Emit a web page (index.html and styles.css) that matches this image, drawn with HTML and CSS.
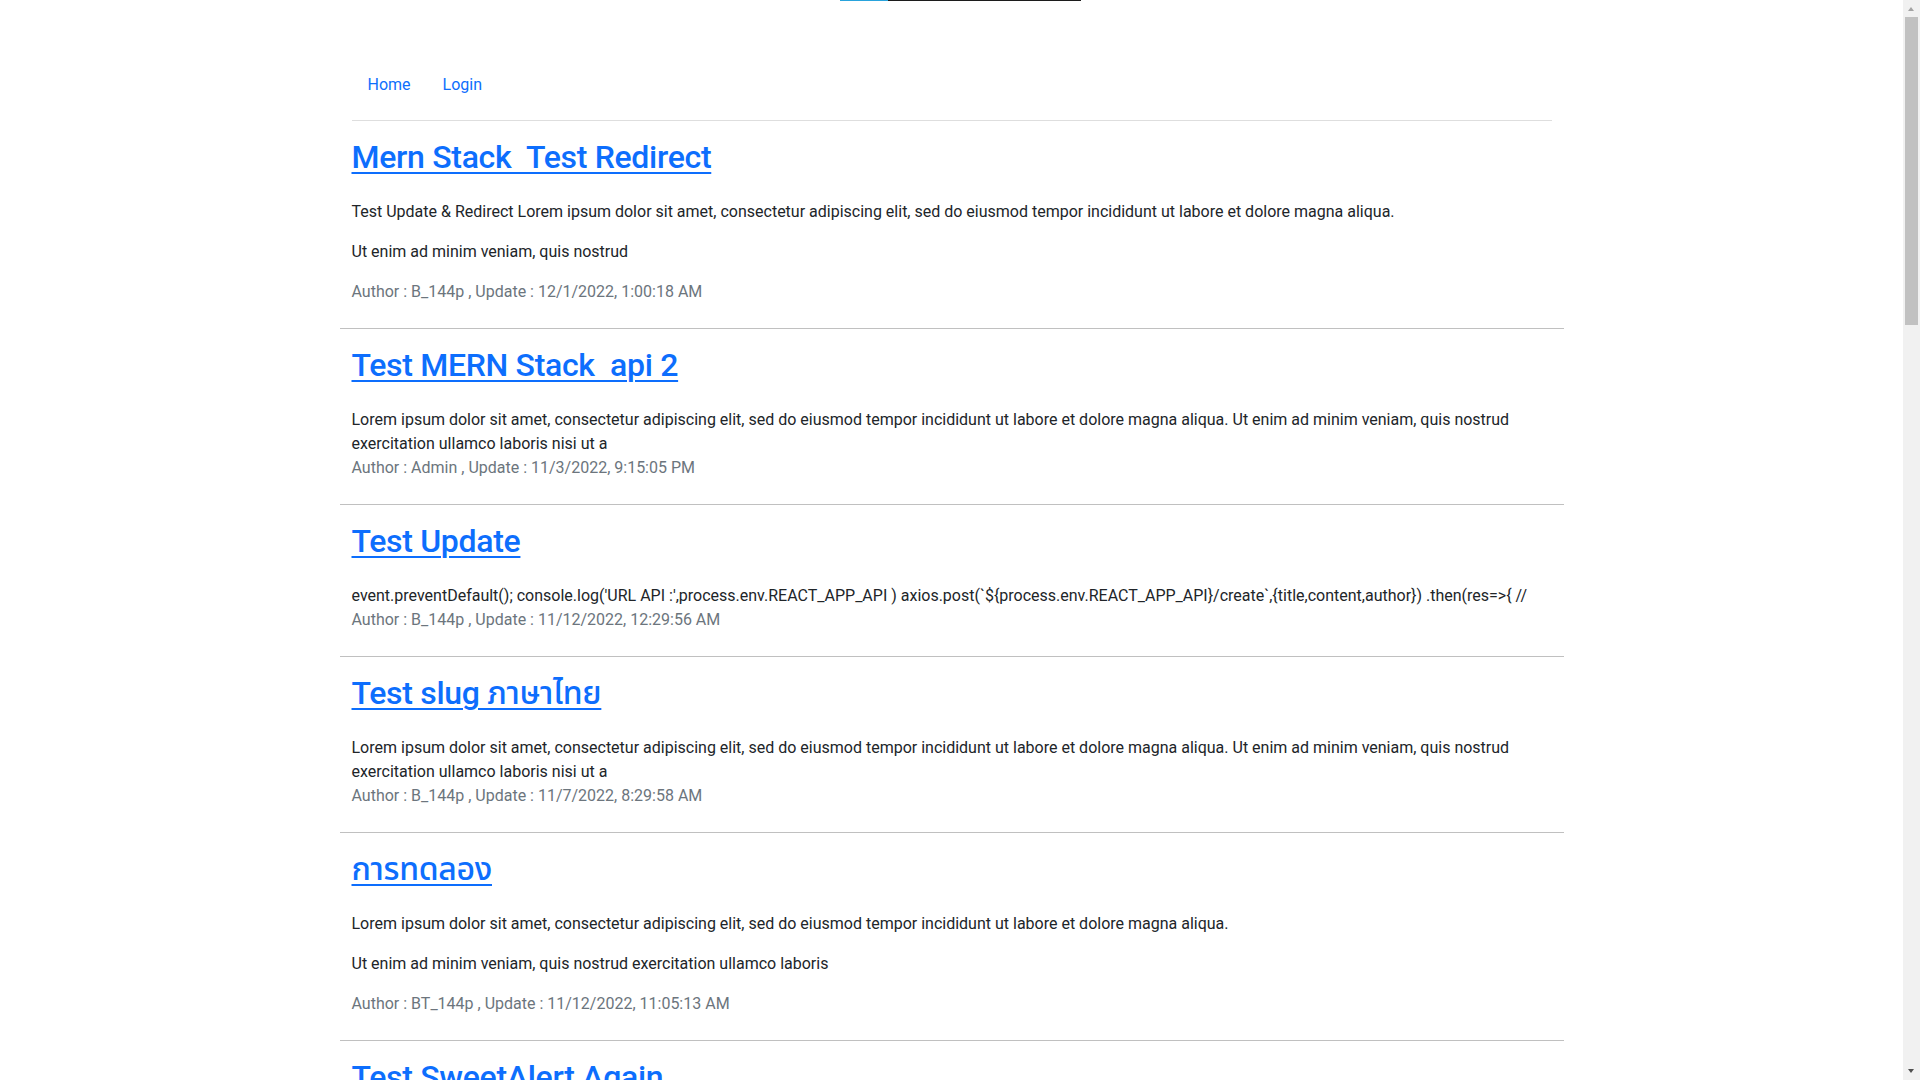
FILE: index.html
```html
<!DOCTYPE html>
<html lang="th">
<head>
<meta charset="utf-8">
<title>Blog</title>
<link rel="stylesheet" href="styles.css">
</head>
<body>
<div class="loadbar"><span class="loadbar-blue"></span><span class="loadbar-dark"></span></div>
<div class="scrollbar" aria-hidden="true">
  <span class="scroll-arrow scroll-up"></span>
  <span class="scroll-thumb"></span>
  <span class="scroll-arrow scroll-down"></span>
</div>
<main class="container">
  <header class="header">
    <nav class="nav">
      <a class="nav-link" href="#">Home</a>
      <a class="nav-link" href="#">Login</a>
    </nav>
    <hr class="nav-rule">
  </header>

  <article class="post">
    <a class="post-title" href="#">Mern Stack&nbsp; Test Redirect</a>
    <div class="post-content">
      <p>Test Update &amp; Redirect Lorem ipsum dolor sit amet, consectetur adipiscing elit, sed do eiusmod tempor incididunt ut labore et dolore magna aliqua.</p>
      <p>Ut enim ad minim veniam, quis nostrud</p>
    </div>
    <p class="post-meta">Author : B_144p , Update : 12/1/2022, 1:00:18 AM</p>
  </article>

  <article class="post">
    <a class="post-title" href="#">Test MERN Stack&nbsp; api 2</a>
    <div class="post-content">Lorem ipsum dolor sit amet, consectetur adipiscing elit, sed do eiusmod tempor incididunt ut labore et dolore magna aliqua. Ut enim ad minim veniam, quis nostrud exercitation ullamco laboris nisi ut a</div>
    <p class="post-meta">Author : Admin , Update : 11/3/2022, 9:15:05 PM</p>
  </article>

  <article class="post">
    <a class="post-title" href="#">Test Update</a>
    <div class="post-content">event.preventDefault(); console.log('URL API :',process.env.REACT_APP_API ) axios.post(`${process.env.REACT_APP_API}/create`,{title,content,author}) .then(res=&gt;{ //</div>
    <p class="post-meta">Author : B_144p , Update : 11/12/2022, 12:29:56 AM</p>
  </article>

  <article class="post">
    <a class="post-title" href="#">Test slug ภาษาไทย</a>
    <div class="post-content">Lorem ipsum dolor sit amet, consectetur adipiscing elit, sed do eiusmod tempor incididunt ut labore et dolore magna aliqua. Ut enim ad minim veniam, quis nostrud exercitation ullamco laboris nisi ut a</div>
    <p class="post-meta">Author : B_144p , Update : 11/7/2022, 8:29:58 AM</p>
  </article>

  <article class="post">
    <a class="post-title" href="#">การทดลอง</a>
    <div class="post-content">
      <p>Lorem ipsum dolor sit amet, consectetur adipiscing elit, sed do eiusmod tempor incididunt ut labore et dolore magna aliqua.</p>
      <p>Ut enim ad minim veniam, quis nostrud exercitation ullamco laboris</p>
    </div>
    <p class="post-meta">Author : BT_144p , Update : 11/12/2022, 11:05:13 AM</p>
  </article>

  <article class="post">
    <a class="post-title" href="#">Test SweetAlert Again</a>
    <div class="post-content">Lorem ipsum dolor sit amet, consectetur adipiscing elit, sed do eiusmod tempor incididunt ut labore et dolore magna aliqua.</div>
    <p class="post-meta">Author : Admin , Update : 11/2/2022, 10:12:40 PM</p>
  </article>
</main>
</body>
</html>
```
FILE: styles.css
```css
html, body {
  margin: 0;
  padding: 0;
}
body {
  font-family: Roboto, "Noto Sans Thai", "Liberation Sans", sans-serif;
  font-size: 16px;
  line-height: 24px;
  color: #212529;
  background: #fff;
  padding-right: 17px;
}
.loadbar {
  position: fixed;
  top: 0;
  left: 840px;
  height: 1px;
  display: flex;
  z-index: 10;
}
.loadbar-blue {
  width: 48px;
  background: #29a3dc;
}
.loadbar-dark {
  width: 193px;
  background: #1c1c1c;
}
.scrollbar {
  position: fixed;
  top: 0;
  right: 0;
  width: 17px;
  height: 100vh;
  background: #f1f1f1;
  z-index: 20;
}
.scroll-thumb {
  position: absolute;
  left: 2px;
  width: 13px;
  top: 17px;
  height: 308px;
  background: #c1c1c1;
}
.scroll-arrow {
  position: absolute;
  left: 5px;
  width: 0;
  height: 0;
  border-left: 3.5px solid transparent;
  border-right: 3.5px solid transparent;
}
.scroll-up {
  top: 7px;
  border-bottom: 4px solid #a3a3a3;
}
.scroll-down {
  bottom: 7px;
  border-top: 4px solid #505050;
}
.container {
  width: 1224px;
  margin: 0 auto;
}
.header {
  padding: 65px 12px 0;
}
.nav {
  display: flex;
}
.nav-link {
  display: block;
  padding: 8px 16px;
  color: #0d6efd;
  text-decoration: none;
}
.nav-rule {
  margin: 15px 0 0;
  border: 0;
  border-top: 1px solid #dedede;
  height: 0;
}
.post {
  padding: 17px 12px 24px;
  border-bottom: 1px solid #c0c0c0;
}
.post-title {
  display: inline-block;
  font-size: 32px;
  font-weight: 500;
  line-height: 38px;
  letter-spacing: -0.3px;
  color: #0d6efd;
  text-decoration: underline;
  text-decoration-thickness: 2px;
  text-underline-offset: 4px;
  margin-bottom: 24px;
}
.post-content p {
  margin: 0 0 16px;
}
.post-meta {
  margin: 0;
  color: #6c757d;
}
```
